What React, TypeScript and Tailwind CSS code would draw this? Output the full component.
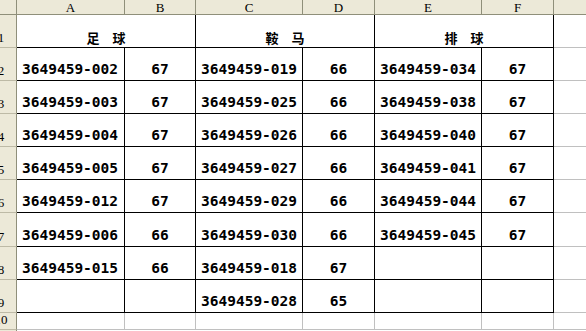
import React from 'react';

const cols = [
  { key: 'A', w: 'w-[108px]' },
  { key: 'B', w: 'w-[71px]' },
  { key: 'C', w: 'w-[107px]' },
  { key: 'D', w: 'w-[72px]' },
  { key: 'E', w: 'w-[107px]' },
  { key: 'F', w: 'w-[72px]' },
];

// each row: [A, B, C, D, E, F]
const rows: { n: number; h: string; cells: string[] }[] = [
  { n: 2, h: 'h-[33px]', cells: ['3649459-002', '67', '3649459-019', '66', '3649459-034', '67'] },
  { n: 3, h: 'h-[33px]', cells: ['3649459-003', '67', '3649459-025', '66', '3649459-038', '67'] },
  { n: 4, h: 'h-[33px]', cells: ['3649459-004', '67', '3649459-026', '66', '3649459-040', '67'] },
  { n: 5, h: 'h-[33px]', cells: ['3649459-005', '67', '3649459-027', '66', '3649459-041', '67'] },
  { n: 6, h: 'h-[33px]', cells: ['3649459-012', '67', '3649459-029', '66', '3649459-044', '67'] },
  { n: 7, h: 'h-[34px]', cells: ['3649459-006', '66', '3649459-030', '66', '3649459-045', '67'] },
  { n: 8, h: 'h-[33px]', cells: ['3649459-015', '66', '3649459-018', '67', '', ''] },
  { n: 9, h: 'h-[33px]', cells: ['', '', '3649459-028', '65', '', ''] },
];

function RowHead({ n, h }: { n?: number; h: string }) {
  return (
    <div className={`${h} w-[17px] shrink-0 overflow-hidden bg-[#ece9d8] border-r border-b border-r-[#8f8f7a] border-b-[#bdbaa6] relative`}>
      {n !== undefined && (
        <div className="absolute left-[-12px] bottom-[3px] w-[26px] text-center text-[13px] leading-none text-black font-['Liberation_Serif',serif]">
          {n}
        </div>
      )}
    </div>
  );
}

export default function App() {
  return (
    <div className="w-[586px] h-[331px] overflow-hidden bg-white font-['DejaVu_Sans_Mono',monospace]">
      {/* column headers */}
      <div className="flex h-[15px]">
        <div className="w-[17px] shrink-0 bg-[#ece9d8] border-r border-b border-[#8f8f7a]" />
        {cols.map((c) => (
          <div
            key={c.key}
            className={`${c.w} shrink-0 bg-[#ece9d8] border-r border-b border-[#8f8f7a] flex items-center justify-center text-[13px] leading-none text-black font-['Liberation_Serif',serif]`}
          >
            {c.key}
          </div>
        ))}
        <div className="flex-1 bg-[#ece9d8] border-b border-[#8f8f7a]" />
      </div>

      {/* row 1: merged titles */}
      <div className="flex">
        <RowHead n={1} h="h-[33px]" />
        {['足　球', '鞍　马', '排　球'].map((t) => (
          <div
            key={t}
            className="w-[179px] h-[33px] shrink-0 border-r border-b border-black flex items-end justify-center pb-[3px] text-[13px] font-bold leading-none text-black font-['Noto_Sans_CJK_SC',sans-serif]"
          >
            {t}
          </div>
        ))}
        <div className="flex-1 h-[33px] border-b border-[#c0c0c0]" />
      </div>

      {rows.map((r) => (
        <div key={r.n} className="flex">
          <RowHead n={r.n} h={r.h} />
          {r.cells.map((v, i) => (
            <div
              key={i}
              className={`${cols[i].w} ${r.h} shrink-0 border-r border-b border-black flex items-end pb-[4px] text-[14.5px] font-bold leading-none text-black ${
                i % 2 === 0 ? 'justify-start pl-[5px]' : 'justify-center'
              }`}
            >
              {v}
            </div>
          ))}
          <div className={`flex-1 ${r.h} border-b border-[#c0c0c0]`} />
        </div>
      ))}

      {/* row 10 */}
      <div className="flex">
        <RowHead n={10} h="h-[17px]" />
        {cols.map((c) => (
          <div key={c.key} className={`${c.w} h-[17px] shrink-0 border-r border-b border-[#c0c0c0]`} />
        ))}
        <div className="flex-1 h-[17px] border-b border-[#c0c0c0]" />
      </div>
      <div className="flex">
        <RowHead h="h-[17px]" />
      </div>
    </div>
  );
}
